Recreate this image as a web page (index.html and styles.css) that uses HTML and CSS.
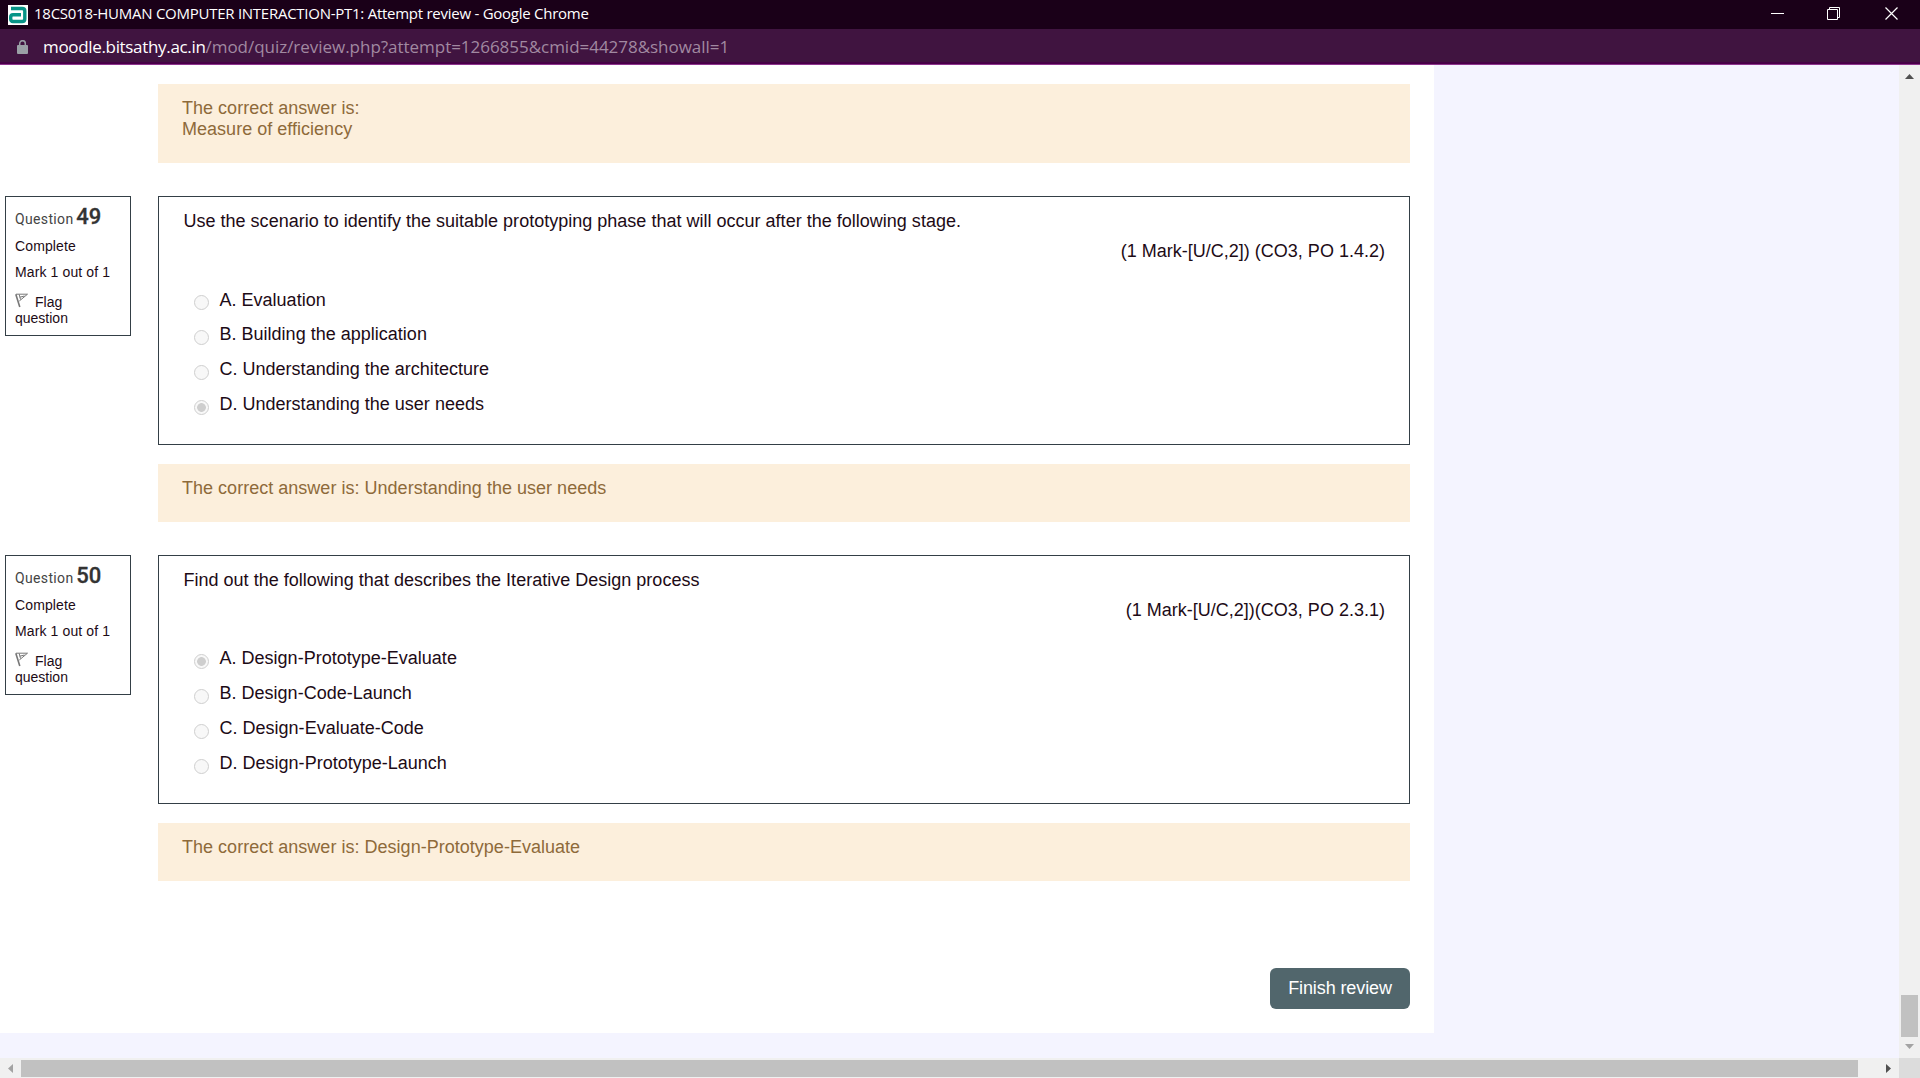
FILE: index.html
```html
<!DOCTYPE html>
<html lang="en">
<head>
<meta charset="utf-8">
<title>18CS018-HUMAN COMPUTER INTERACTION-PT1: Attempt review</title>
<link rel="stylesheet" href="styles.css">
</head>
<body>
<header class="titlebar">
  <svg class="favicon" width="20" height="20" viewBox="0 0 20 20"><rect width="20" height="20" fill="#fff"/><path d="M3 3.500H14.200Q16.800 3.500 16.800 6V14Q16.800 16.500 14.200 16.500H5Q2.700 16.500 2.700 14V12Q2.700 9.700 5 9.700H13" fill="none" stroke="#079487" stroke-width="3.400"/></svg>
  <span class="window-title">18CS018-HUMAN COMPUTER INTERACTION-PT1: Attempt review - Google Chrome</span>
  <svg class="window-controls" width="150" height="29" viewBox="0 0 150 29" fill="none" stroke="#fff"><path d="M1 13.500H14M57.500 9.500H67.500V19.500H57.500zM59.500 9V7.500H69.500V17.500H68"/><path d="M115.500 7.500L127.500 19.500M127.500 7.500L115.500 19.500" stroke-width="1.200"/></svg>
</header>
<div class="addressbar">
  <svg class="lock" width="11" height="14" viewBox="0 0 11 14"><rect y="5" width="11" height="9" rx="1" fill="#9aa0a6"/><path d="M2.700 6V3.500a2.800 2.800 0 0 1 5.600 0V6" fill="none" stroke="#9aa0a6" stroke-width="1.500"/></svg>
  <span class="url"><span class="host">moodle.bitsathy.ac.in</span><span class="path">/mod/quiz/review.php?attempt=1266855&amp;cmid=44278&amp;showall=1</span></span>
</div>
<div class="viewport">
  <main class="page">
    <div class="feedback feedback-tall">The correct answer is:<br>Measure of efficiency</div>

    <section class="question">
      <aside class="info">
        <h3 class="number">Question <b>49</b></h3>
        <p class="state">Complete</p>
        <p class="grade">Mark 1 out of 1</p>
        <p class="flag"><svg width="14" height="15" viewBox="0 0 14 15" fill="none" stroke="#777"><path d="M.8 1.300L4.800 14" stroke-width="1.600"/><path d="M1 1.200H12.500L4.300 8M4.200 1.500L5.500 6.500M4.800 4.200L9.500 3"/></svg><span>Flag</span><br>question</p>
      </aside>
      <div class="formulation">
        <p class="prompt">Use the scenario to identify the suitable prototyping phase that will occur after the following stage.</p>
        <p class="mark">(1 Mark-[U/C,2]) (CO3, PO 1.4.2)</p>
        <ul class="answers">
          <li class="single-line"><i class="radio"></i><span>A. Evaluation</span></li>
          <li><i class="radio"></i><span>B. Building the application</span></li>
          <li><i class="radio"></i><span>C. Understanding the architecture</span></li>
          <li><i class="radio checked"></i><span>D. Understanding the user needs</span></li>
        </ul>
      </div>
    </section>
    <div class="feedback">The correct answer is: Understanding the user needs</div>

    <section class="question">
      <aside class="info">
        <h3 class="number">Question <b>50</b></h3>
        <p class="state">Complete</p>
        <p class="grade">Mark 1 out of 1</p>
        <p class="flag"><svg width="14" height="15" viewBox="0 0 14 15" fill="none" stroke="#777"><path d="M.8 1.300L4.800 14" stroke-width="1.600"/><path d="M1 1.200H12.500L4.300 8M4.200 1.500L5.500 6.500M4.800 4.200L9.500 3"/></svg><span>Flag</span><br>question</p>
      </aside>
      <div class="formulation">
        <p class="prompt">Find out the following that describes the Iterative Design process</p>
        <p class="mark">(1 Mark-[U/C,2])(CO3, PO 2.3.1)</p>
        <ul class="answers">
          <li><i class="radio checked"></i><span>A. Design-Prototype-Evaluate</span></li>
          <li><i class="radio"></i><span>B. Design-Code-Launch</span></li>
          <li><i class="radio"></i><span>C. Design-Evaluate-Code</span></li>
          <li><i class="radio"></i><span>D. Design-Prototype-Launch</span></li>
        </ul>
      </div>
    </section>
    <div class="feedback">The correct answer is: Design-Prototype-Evaluate</div>
    <a class="finish">Finish review</a>
  </main>
  <div class="vbar">
    <svg width="9" height="5" viewBox="0 0 9 5"><path d="M0 5L4.500 0L9 5z" fill="#505050"/></svg>
    <div class="vthumb"></div>
    <svg width="9" height="5" viewBox="0 0 9 5"><path d="M0 0H9L4.500 5z" fill="#a3a3a3"/></svg>
  </div>
  <div class="hbar">
    <svg width="5" height="9" viewBox="0 0 5 9"><path d="M5 0V9L0 4.500z" fill="#a3a3a3"/></svg>
    <div class="hthumb"></div>
    <svg width="5" height="9" viewBox="0 0 5 9"><path d="M0 0V9L5 4.500z" fill="#505050"/></svg>
  </div>
  <div class="corner"></div>
</div>
</body>
</html>
```
FILE: styles.css
```css
* { box-sizing: border-box; }
body {
  margin: 0;
  width: 1920px;
  height: 1078px;
  display: flex;
  flex-direction: column;
  overflow: hidden;
  font: 18px/21px "Liberation Sans", Arial, sans-serif;
  color: #1d0b16;
}
p, h3, ul { margin: 0; padding: 0; }
.titlebar {
  height: 29px;
  background: #1a0018;
  display: flex;
  align-items: center;
  padding-left: 8px;
}
.window-title {
  margin-left: 6px;
  padding-bottom: 2px;
  color: #fff;
  font: 15px/27px "Open Sans", "Noto Sans", sans-serif;
  letter-spacing: -0.26px;
  white-space: nowrap;
}
.window-controls { margin-left: auto; margin-right: 0; }
.addressbar {
  height: 36px;
  background: #401440;
  border-bottom: 1px solid #8d338d;
  box-shadow: inset 0 -2px #470047;
  display: flex;
  align-items: center;
  padding-left: 17px;
}
.url {
  margin-left: 15px;
  font: 17px/34px "Open Sans", "Noto Sans", sans-serif;
  white-space: nowrap;
}
.host { color: #fff; letter-spacing: -0.33px; }
.path { color: #a189a1; letter-spacing: -0.03px; }
.viewport {
  flex: 1;
  display: grid;
  grid-template-columns: 1899px 21px;
  grid-template-rows: 993px 20px;
  background: #f4f4ff;
}
.page {
  width: 1434px;
  height: 968px;
  background: #fff;
  padding: 19px 24px 0 5px;
  display: flex;
  flex-direction: column;
}
.feedback {
  height: 58px;
  margin: 19px 0 33px 153px;
  padding: 14px 24px;
  background: #fcefdc;
  color: #8e6a3a;
  letter-spacing: 0.02px;
}
.feedback-tall { height: 79px; margin-top: 0; }
.question {
  display: grid;
  grid-template-columns: 126px 1252px;
  column-gap: 27px;
  align-items: start;
}
.info {
  height: 140px;
  border: 1px solid #343f46;
  padding: 8px 9px;
  font-size: 14px;
  line-height: 16px;
}
.number {
  font: 400 14px/24px Roboto, sans-serif;
  color: #444;
  letter-spacing: 0.35px;
}
.number b { margin-left: -1px; font-size: 22px; font-weight: 500; letter-spacing: -0.2px; color: #333; -webkit-text-stroke: 0.3px #333; }
.state { margin-top: 7px; letter-spacing: 0.12px; }
.grade { margin-top: 10px; letter-spacing: 0.12px; }
.flag { margin-top: 13px; }
.flag svg { margin-right: 6px; vertical-align: -1px; }
.formulation {
  height: 249px;
  border: 1px solid #343f46;
  padding: 14px 24px 0 24.5px;
  letter-spacing: 0.01px;
}
.mark { margin-top: 9px; text-align: right; }
.answers { list-style: none; margin-top: 20px; padding-left: 10px; }
.answers li { height: 35px; display: flex; padding-top: 7px; }
.answers .single-line span { padding-top: 1px; }
.radio {
  width: 15px;
  height: 15px;
  margin: 6px 11px 0 0;
  border: 1px solid #cfcfcf;
  border-radius: 50%;
  background: #f8f8f8;
}
.checked { background: radial-gradient(circle, #cecece 0 4px, #f8f8f8 4.700px); }
.finish {
  align-self: flex-end;
  width: 140px;
  height: 41px;
  margin-top: 54px;
  border-radius: 6px;
  background: #51666c;
  color: #fff;
  text-align: center;
  line-height: 41px;
  letter-spacing: -0.1px;
}
.vbar, .hbar { background: #f0f0f0; display: flex; align-items: center; }
.vbar { flex-direction: column; padding-top: 9px; }
.vthumb { width: 17px; height: 42px; margin: 916px 0 7px; background: #c1c1c1; flex: none; }
.hbar { padding-left: 8px; }
.hthumb { width: 1837px; height: 17px; margin: 1px 28px 0 8px; background: #c1c1c1; }
.corner { background: #dcdcdc; }
svg { flex: none; }
```
